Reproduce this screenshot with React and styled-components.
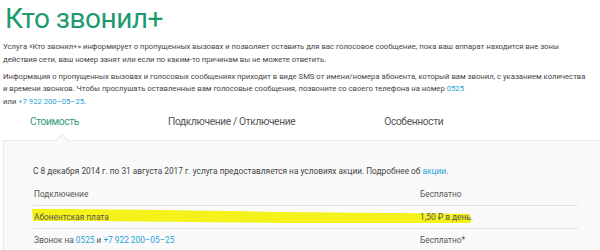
import React from 'react';
import styled, { createGlobalStyle } from 'styled-components';

const GlobalStyle = createGlobalStyle`
  body {
    margin: 0;
    background: #fff;
    font-family: Roboto, "Liberation Sans", sans-serif;
    color: #444;
  }
`;

const Page = styled.div`
  width: 600px;
  height: 250px;
  overflow: hidden;
  padding-left: 3px;
  box-sizing: border-box;
`;

const Title = styled.h1`
  margin: 0;
  padding: 2px 0 0 2px;
  font-size: 28px;
  font-weight: 400;
  line-height: 34px;
  color: #1b9b6d;
  letter-spacing: -0.5px;
`;

const Para = styled.p`
  margin: ${p => p.top}px 0 0;
  font-size: 7.7px;
  line-height: 12.8px;
  color: #444;
`;

const Link = styled.a`
  color: #2aa0d8;
  text-decoration: none;
`;

const Tabs = styled.div`
  display: flex;
  gap: 89px;
  padding-left: 27px;
  margin-top: 1px;
  height: 24px;
  align-items: center;
`;

const Tab = styled.div`
  font-size: 10.2px;
  letter-spacing: -0.35px;
  color: ${p => (p.active ? '#2f9a72' : '#555')};
`;

const Box = styled.div`
  position: relative;
  margin-top: 6px;
  border-top: 1px solid #e9e9e9;
  border-left: 1px solid #e9e9e9;
  background: #fafafa;
  padding: 24px 0 0 29px;
  height: 200px;
`;

const Notch = styled.div`
  position: absolute;
  top: -5px;
  left: 53px;
  width: 9px;
  height: 9px;
  background: #fafafa;
  border-top: 1px solid #e9e9e9;
  border-left: 1px solid #e9e9e9;
  transform: rotate(45deg);
`;

const Note = styled.div`
  font-size: 8.3px;
  color: #444;
  line-height: 12px;
`;

const Table = styled.div`
  margin-top: 6px;
  width: 545px;
`;

const Row = styled.div`
  position: relative;
  display: grid;
  grid-template-columns: 386px 1fr;
  height: 22px;
  align-items: center;
  font-size: 8.3px;
  color: #555;
  border-top: ${p => (p.first ? 'none' : '1px solid #e4e4e4')};
  padding-left: 1px;
`;

const Cell = styled.span`
  position: relative;
  z-index: 1;
`;

const Marker = styled.svg`
  position: absolute;
  left: -1px;
  top: 0;
  width: 440px;
  height: 22px;
  pointer-events: none;
`;

export default function App() {
  return (
    <>
      <GlobalStyle />
      <Page>
        <Title>Кто звонил+</Title>
        <Para top={5}>
          Услуга «Кто звонил+» информирует о пропущенных вызовах и позволяет оставить для вас голосовое сообщение, пока ваш аппарат находится вне зоны
          <br />
          действия сети, ваш номер занят или если по каким-то причинам вы не можете ответить.
        </Para>
        <Para top={4}>
          Информация о пропущенных вызовах и голосовых сообщениях приходит в виде SMS от имени/номера абонента, который вам звонил, с указанием количества
          <br />
          и времени звонков. Чтобы прослушать оставленные вам голосовые сообщения, позвоните со своего телефона на номер <Link>0525</Link>
          <br />
          или <Link>+7 922 200–05–25</Link>.
        </Para>
        <Tabs>
          <Tab active>Стоимость</Tab>
          <Tab>Подключение / Отключение</Tab>
          <Tab>Особенности</Tab>
        </Tabs>
        <Box>
          <Notch />
          <Note>
            С 8 декабря 2014 г. по 31 августа 2017 г. услуга предоставляется на условиях акции. Подробнее об <Link>акции</Link>.
          </Note>
          <Table>
            <Row first>
              <Cell>Подключение</Cell>
              <Cell>Бесплатно</Cell>
            </Row>
            <Row>
              <Marker viewBox="0 0 440 22">
                <path
                  d="M0 3 C60 3 150 4 250 6 C330 7 400 7 438 8 L439 17 C400 17 330 17 250 17 C150 16 60 15 1 15 Z"
                  fill="#f4f21a"
                />
              </Marker>
              <Cell>Абонентская плата</Cell>
              <Cell>1,50 ₽ в день.</Cell>
            </Row>
            <Row>
              <Cell>
                Звонок на <Link>0525</Link> и <Link>+7 922 200–05–25</Link>
              </Cell>
              <Cell>Бесплатно*</Cell>
            </Row>
          </Table>
        </Box>
      </Page>
    </>
  );
}
